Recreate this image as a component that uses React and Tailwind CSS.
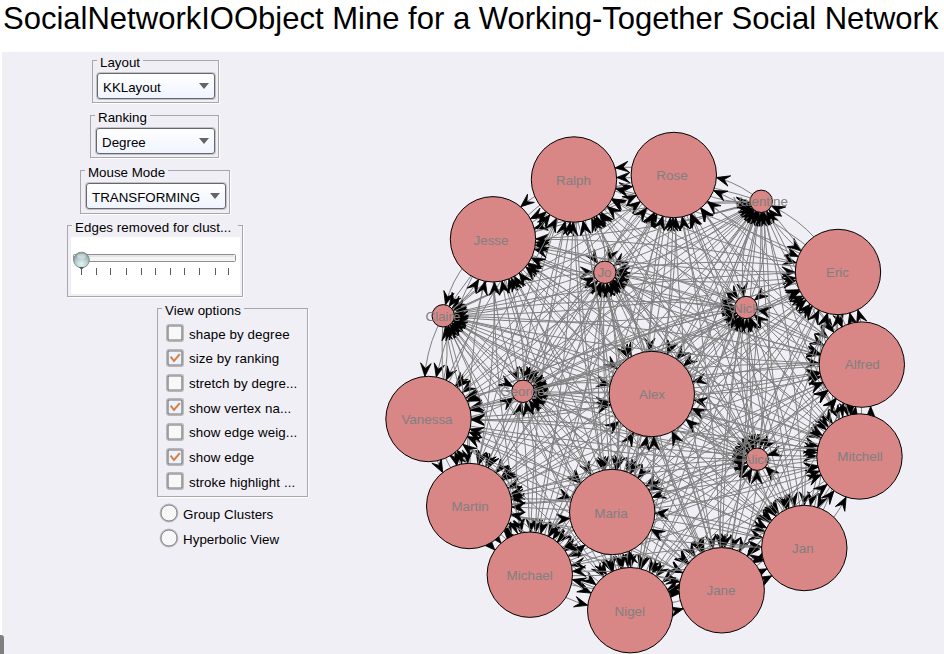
const NODES = [
  { name: 'Ralph', x: 574, y: 179.5, r: 42.7, lx: 573.5, ly: 185 },
  { name: 'Rose', x: 673.8, y: 175, r: 42.7, lx: 672, ly: 180 },
  { name: 'Valentine', x: 761.2, y: 201.3, r: 11.2, lx: 760.5, ly: 206 },
  { name: 'Jesse', x: 493, y: 239.3, r: 42.7, lx: 491, ly: 245 },
  { name: 'Eric', x: 838, y: 272, r: 42.7, lx: 837.5, ly: 277 },
  { name: 'Jo', x: 604.8, y: 272.3, r: 11.2, lx: 604.5, ly: 277 },
  { name: 'Nick', x: 746, y: 307.5, r: 11.2, lx: 746, ly: 313 },
  { name: 'Claire', x: 443.2, y: 315.8, r: 11.2, lx: 443, ly: 321 },
  { name: 'Alfred', x: 861.8, y: 364.6, r: 42.7, lx: 862.3, ly: 369 },
  { name: 'George', x: 523, y: 391.3, r: 11.2, lx: 522.5, ly: 396 },
  { name: 'Alex', x: 651.8, y: 394, r: 42.7, lx: 652, ly: 399 },
  { name: 'Vanessa', x: 428.5, y: 419, r: 42.7, lx: 427, ly: 424 },
  { name: 'Mitchell', x: 859.5, y: 456.5, r: 42.7, lx: 860, ly: 461 },
  { name: 'Alice', x: 757.2, y: 459.2, r: 11.2, lx: 757, ly: 464 },
  { name: 'Martin', x: 469.2, y: 506, r: 42.7, lx: 470, ly: 511 },
  { name: 'Maria', x: 612.2, y: 512, r: 42.7, lx: 611, ly: 518 },
  { name: 'Jan', x: 804.3, y: 548, r: 42.7, lx: 802.8, ly: 553 },
  { name: 'Michael', x: 529.8, y: 574.7, r: 42.7, lx: 529.7, ly: 580 },
  { name: 'Nigel', x: 630.2, y: 610.2, r: 42.7, lx: 629.8, ly: 616 },
  { name: 'Jane', x: 721.7, y: 590.3, r: 42.7, lx: 721, ly: 595 },
];

const CURVE = 20;

// Quadratic edge bulging to the right of its direction, with the arrow tip on the target's rim.
function makeEdge(a, b) {
  const dx = b.x - a.x;
  const dy = b.y - a.y;
  const len = Math.hypot(dx, dy);
  const cx = (a.x + b.x) / 2 - (dy / len) * CURVE;
  const cy = (a.y + b.y) / 2 + (dx / len) * CURVE;
  const at = (t) => [
    (1 - t) * (1 - t) * a.x + 2 * t * (1 - t) * cx + t * t * b.x,
    (1 - t) * (1 - t) * a.y + 2 * t * (1 - t) * cy + t * t * b.y,
  ];
  let lo = 0;
  let hi = 1;
  for (let i = 0; i < 20; i++) {
    const mid = (lo + hi) / 2;
    const [px, py] = at(mid);
    if (Math.hypot(px - b.x, py - b.y) > b.r) lo = mid;
    else hi = mid;
  }
  const [tx, ty] = at(lo);
  const [sx, sy] = at(Math.max(0, lo - 0.03));
  const angle = (Math.atan2(ty - sy, tx - sx) * 180) / Math.PI;
  return {
    d: `M${a.x} ${a.y}Q${cx.toFixed(2)} ${cy.toFixed(2)} ${b.x} ${b.y}`,
    arrow: `translate(${tx.toFixed(2)} ${ty.toFixed(2)}) rotate(${angle.toFixed(2)})`,
  };
}

const EDGES = NODES.flatMap((a) => NODES.filter((b) => b !== a).map((b) => makeEdge(a, b)));

function Graph() {
  return (
    <svg viewBox="320 52 624 602" className="h-[602px] w-[624px] shrink-0">
      {EDGES.map((e, i) => (
        <g key={i}>
          <path d={e.d} fill="none" stroke="#808080" strokeWidth="1" />
          <path d="M0 0L-13.3 -5.3L-8 0L-13.3 5.3Z" transform={e.arrow} fill="#000" stroke="#000" strokeWidth="0.8" />
        </g>
      ))}
      {NODES.map((n) => (
        <g key={n.name}>
          <circle cx={n.x} cy={n.y} r={n.r} fill="#d88686" stroke="#000" strokeWidth="1" />
          <text x={n.lx} y={n.ly} textAnchor="middle" fill="#808080" className="font-['Liberation_Sans',Arial,sans-serif] text-[13.4px]">
            {n.name}
          </text>
        </g>
      ))}
    </svg>
  );
}

function Group({ title, className, titleClass = 'ml-[3px]', children }) {
  return (
    <section className={`border border-[#a8a8ac] shadow-[1px_1px_0_#fff] ${className}`}>
      <h2 className={`-mt-[6px] h-[15px] w-fit bg-[#f0eff5] px-[3px] leading-[15px] whitespace-nowrap ${titleClass}`}>{title}</h2>
      {children}
    </section>
  );
}

function Combo({ value, className }) {
  return (
    <div className={`flex h-[26px] items-center justify-between rounded-[3px] border border-[#66686c] bg-gradient-to-b from-white to-[#eff4ff] pr-[5px] pl-[5px] shadow-[0_0_0_1px_#c4c4c8] ${className}`}>
      <span className="pt-[3px] leading-[15px]">{value}</span>
      <svg viewBox="0 0 10 6" className="h-[6px] w-[10px]">
        <path d="M0 0H10L5 6Z" fill="#646464" />
      </svg>
    </div>
  );
}

const TICKS = [8, 23, 37, 53, 68, 82, 97, 111, 126, 142, 155];

function Slider() {
  return (
    <svg viewBox="0 0 169 57" className="mt-[2px] ml-[3px] h-[57px] w-[169px] bg-white">
      <defs>
        <radialGradient id="knob" cx="0.5" cy="0.75" r="0.7">
          <stop offset="0" stopColor="#e4f5f5" />
          <stop offset="0.55" stopColor="#b5cccd" />
          <stop offset="1" stopColor="#84999b" />
        </radialGradient>
      </defs>
      <rect x="2.5" y="17.5" width="162" height="7" rx="1" fill="#f5f5f5" stroke="#8e8e8e" />
      <path d="M4 19H163" stroke="#d4d4d4" />
      {TICKS.map((t) => (
        <path key={t} d={`M${t + 2.5} 31V38`} stroke="#5c5c5c" />
      ))}
      <circle cx="10.5" cy="23" r="7.8" fill="url(#knob)" stroke="#849092" strokeWidth="1" />
      <ellipse cx="10.5" cy="19" rx="4.5" ry="2.6" fill="#fff" opacity="0.4" />
      <path d="M8 30H13L10.5 33Z" fill="#555" />
    </svg>
  );
}

const OPTIONS = [
  ['shape by degree', false],
  ['size by ranking', true],
  ['stretch by degre...', false],
  ['show vertex na...', true],
  ['show edge weig...', false],
  ['show edge', true],
  ['stroke highlight ...', false],
];

function CheckRow({ label, checked }) {
  return (
    <div className="flex h-[24.67px] items-center gap-[5px]">
      <svg viewBox="0 0 18 18" className="h-[18px] w-[18px]">
        <rect x="0.8" y="0.8" width="16.4" height="16.4" rx="2" fill="#fff" stroke="#b7b7ba" strokeWidth="1.4" />
        <rect x="2" y="2" width="14" height="14" rx="1" fill={checked ? '#edf3fc' : '#f8f8f9'} stroke="#747474" strokeWidth="1.2" />
        {checked && <path d="M4.6 7.6L8 12L13.8 5.2" fill="none" stroke="#d97f3d" strokeWidth="2" />}
      </svg>
      <span className="pt-[2px] leading-[15px] tracking-[0.09px] whitespace-nowrap">{label}</span>
    </div>
  );
}

function RadioRow({ label }) {
  return (
    <div className="flex h-[25px] items-center gap-[4px]">
      <svg viewBox="0 0 20 20" className="h-[20px] w-[20px]">
        <circle cx="10" cy="10" r="8.6" fill="#f7f7f8" stroke="#bcbcbf" strokeWidth="1.6" />
        <circle cx="10" cy="10" r="8" fill="none" stroke="#8b8b8e" strokeWidth="1" />
      </svg>
      <span className="pt-[3px] leading-[15px] tracking-[0.05px]">{label}</span>
    </div>
  );
}

export default function App() {
  return (
    <div className="flex h-[654px] w-[944px] flex-col overflow-hidden bg-white font-['Liberation_Sans',Arial,sans-serif] text-[13.33px] text-black">
      <h1 className="h-[52px] shrink-0 pt-[1px] pl-[3px] text-[31.03px] leading-[36px] whitespace-nowrap">
        SocialNetworkIOObject Mine for a Working-Together Social Network
      </h1>
      <div className="flex h-[602px]">
        <main className="flex w-[944px] border-l-2 border-white bg-[#f0eff5]">
          <aside className="flex w-[318px] shrink-0 flex-col items-start pt-[8px]">
            <Group title="Layout" className="ml-[90px] h-[43px] w-[127px]" titleClass="ml-[4px]">
              <Combo value="KKLayout" className="mt-[3px] ml-[4px] w-[118px]" />
            </Group>
            <Group title="Ranking" className="mt-[12px] ml-[88px] h-[43px] w-[129px]" titleClass="ml-[4px]">
              <Combo value="Degree" className="mt-[3px] ml-[5px] w-[119px]" />
            </Group>
            <Group title="Mouse Mode" className="mt-[12px] ml-[78px] h-[44px] w-[150px]" titleClass="ml-[4px]">
              <Combo value="TRANSFORMING" className="mt-[3px] ml-[5px] w-[140px]" />
            </Group>
            <Group title="Edges removed for clust..." className="mt-[11px] ml-[65px] h-[72px] w-[176px]" titleClass="ml-[4px] pr-[7px] tracking-[0.06px]">
              <Slider />
            </Group>
            <Group title="View options" className="mt-[11px] ml-[155px] h-[189px] w-[151px]" titleClass="ml-[4px] tracking-[0.06px]">
              <div className="mt-[3px] ml-[8px] flex flex-col">
                {OPTIONS.map(([label, checked]) => (
                  <CheckRow key={label} label={label} checked={checked} />
                ))}
              </div>
            </Group>
            <div className="mt-[3px] ml-[157px] flex flex-col">
              <RadioRow label="Group Clusters" />
              <RadioRow label="Hyperbolic View" />
            </div>
            <div className="mt-auto -ml-[2px] h-[19px] w-[4px] rounded-tr-[3px] bg-[#808080]" />
          </aside>
          <Graph />
        </main>
      </div>
    </div>
  );
}
